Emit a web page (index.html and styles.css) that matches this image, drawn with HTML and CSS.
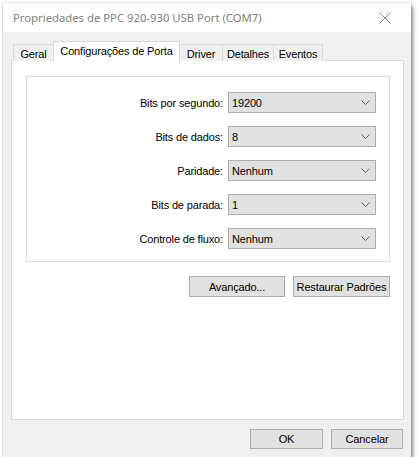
FILE: index.html
```html
<!DOCTYPE html>
<html lang="pt">
<head>
<meta charset="utf-8">
<title>Propriedades de PPC 920-930 USB Port (COM7)</title>
<link rel="stylesheet" href="styles.css">
</head>
<body>
<div class="window">
  <div class="titlebar">
    <span class="title">Propriedades de PPC 920-930 USB Port (COM7)</span>
    <svg class="close" width="12" height="12" viewBox="0 0 12 12"><path d="M0.5 0.5 L11.5 11.5 M11.5 0.5 L0.5 11.5" stroke="#8a8a8a" stroke-width="1" fill="none"/></svg>
  </div>
  <div class="body">
    <div class="tabs">
      <div class="tab t-geral">Geral</div>
      <div class="tab active t-config">Configurações de Porta</div>
      <div class="tab t-driver">Driver</div>
      <div class="tab t-det">Detalhes</div>
      <div class="tab t-ev">Eventos</div>
    </div>
    <div class="panel">
      <div class="group">
        <div class="row"><span class="label">Bits por segundo:</span><div class="combo"><span>19200</span><svg class="chev" width="9" height="5" viewBox="0 0 9 5"><path d="M0.5 0.5 L4.5 4.5 L8.5 0.5" stroke="#606060" fill="none"/></svg></div></div>
        <div class="row"><span class="label">Bits de dados:</span><div class="combo"><span>8</span><svg class="chev" width="9" height="5" viewBox="0 0 9 5"><path d="M0.5 0.5 L4.5 4.5 L8.5 0.5" stroke="#606060" fill="none"/></svg></div></div>
        <div class="row"><span class="label">Paridade:</span><div class="combo"><span>Nenhum</span><svg class="chev" width="9" height="5" viewBox="0 0 9 5"><path d="M0.5 0.5 L4.5 4.5 L8.5 0.5" stroke="#606060" fill="none"/></svg></div></div>
        <div class="row"><span class="label">Bits de parada:</span><div class="combo"><span>1</span><svg class="chev" width="9" height="5" viewBox="0 0 9 5"><path d="M0.5 0.5 L4.5 4.5 L8.5 0.5" stroke="#606060" fill="none"/></svg></div></div>
        <div class="row"><span class="label">Controle de fluxo:</span><div class="combo"><span>Nenhum</span><svg class="chev" width="9" height="5" viewBox="0 0 9 5"><path d="M0.5 0.5 L4.5 4.5 L8.5 0.5" stroke="#606060" fill="none"/></svg></div></div>
      </div>
      <div class="actions">
        <button class="btn adv">Avançado...</button>
        <button class="btn rest">Restaurar Padrões</button>
      </div>
    </div>
    <div class="footer">
      <button class="btn ok">OK</button>
      <button class="btn cancel">Cancelar</button>
    </div>
  </div>
</div>
</body>
</html>
```

FILE: styles.css
```css
html, body {
  margin: 0;
  padding: 0;
  background: #ffffff;
}
body {
  font-family: "Liberation Sans", Arial, sans-serif;
  font-size: 11px;
  letter-spacing: -0.15px;
  color: #000;
}
.window {
  margin: 3px 0 0 3px;
  width: 408px;
  height: 454px;
  display: flex;
  flex-direction: column;
  background: #f0f0f0;
  box-shadow: 0 0 0 1px rgba(0,0,0,0.08), 2px 3px 4px rgba(0,0,0,0.45);
}
.titlebar {
  height: 30px;
  background: #ffffff;
  display: flex;
  align-items: center;
  justify-content: space-between;
  padding: 0 20px 0 10px;
  box-sizing: border-box;
}
.title {
  font-family: "Noto Sans", "Liberation Sans", sans-serif;
  font-size: 11.3px;
  letter-spacing: 0;
  color: #808080;
}
.close {
  display: block;
}
.body {
  flex: 1;
  display: flex;
  flex-direction: column;
  padding: 9px 7px 8px 8px;
  box-sizing: border-box;
}
.tabs {
  display: flex;
  align-items: flex-end;
  height: 20px;
  padding-left: 2px;
  position: relative;
  z-index: 1;
}
.tab {
  height: 17px;
  box-sizing: border-box;
  border: 1px solid #d9d9d9;
  border-bottom: none;
  border-left: none;
  background: #f0f0f0;
  display: flex;
  align-items: center;
  justify-content: center;
  padding-top: 1px;
}
.tab:first-child {
  border-left: 1px solid #d9d9d9;
}
.tab.active {
  height: 21px;
  margin-bottom: -1px;
  background: #ffffff;
  border-left: 1px solid #d9d9d9;
  margin-left: -1px;
  padding: 0 0 3px;
}
.t-geral { width: 41px; }
.t-config { width: 127px; }
.t-driver { width: 43px; }
.t-det { width: 51px; }
.t-ev { width: 49px; }
.panel {
  height: 360px;
  box-sizing: border-box;
  border: 1px solid #d9d9d9;
  background: #ffffff;
  padding: 15px 13px 0 14px;
  margin-top: -1px;
}
.group {
  height: 186px;
  box-sizing: border-box;
  border: 1px solid #dcdcdc;
  padding: 15px 13px 0 0;
  display: flex;
  flex-direction: column;
  gap: 13px;
}
.row {
  display: flex;
  align-items: center;
  justify-content: flex-end;
  gap: 5px;
  height: 21px;
}
.label {
  text-align: right;
}
.combo {
  width: 148px;
  height: 21px;
  box-sizing: border-box;
  border: 1px solid #adadad;
  background: #e1e1e1;
  display: flex;
  align-items: center;
  justify-content: space-between;
  padding: 0 5px 0 3px;
}
.chev {
  display: block;
}
.actions {
  display: flex;
  justify-content: flex-end;
  gap: 8px;
  margin-top: 14px;
}
.btn {
  font-family: "Liberation Sans", Arial, sans-serif;
  font-size: 11px;
  letter-spacing: -0.15px;
  color: #000;
  background: #e1e1e1;
  border: 1px solid #adadad;
  height: 21px;
  padding: 0;
  margin: 0;
  box-sizing: border-box;
  white-space: nowrap;
}
.adv { width: 96px; }
.rest { width: 97px; }
.footer {
  display: flex;
  justify-content: flex-end;
  gap: 8px;
  margin-top: 9px;
  padding-right: 1px;
}
.ok { width: 73px; height: 20px; }
.cancel { width: 72px; height: 20px; }
```
